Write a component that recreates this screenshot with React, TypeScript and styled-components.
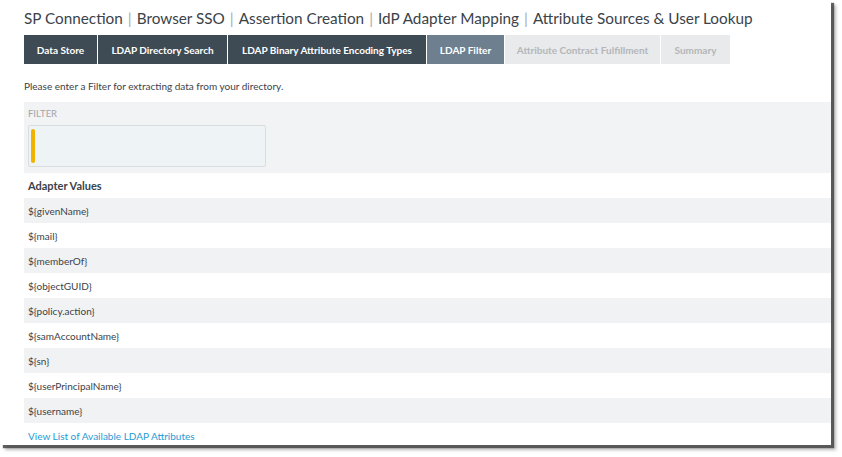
import React from "react";
import styled, { createGlobalStyle } from "styled-components";

const Global = createGlobalStyle`
  html, body { margin: 0; padding: 0; background: #ffffff; }
  body { font-family: Lato, "Open Sans", Arial, sans-serif; color: #333a40; }
`;

const Page = styled.div`
  width: 842px;
  height: 457px;
  overflow: hidden;
  background: #ffffff;
`;

const Panel = styled.div`
  width: 831px;
  height: 445px;
  background: #ffffff;
  box-shadow: 3px 3px 1px rgba(70, 70, 70, 0.85), 5px 5px 3px rgba(120, 120, 120, 0.5);
  padding: 8px 0 0 24px;
  box-sizing: border-box;
  display: flex;
  flex-direction: column;
`;

const Title = styled.h1`
  margin: 0;
  font-size: 15.3px;
  font-weight: 400;
  line-height: 20px;
  color: #3b4249;
  white-space: nowrap;
`;

const Sep = styled.span`
  color: #a5abb0;
  margin: 0 5px;
`;

const Tabs = styled.div`
  display: flex;
  gap: 1px;
  margin-top: 7px;
  height: 29px;
`;

type TabKind = "done" | "active" | "todo";

const Tab = styled.div<{ $kind: TabKind; $w: number }>`
  width: ${(p) => p.$w}px;
  display: flex;
  align-items: center;
  justify-content: center;
  font-size: 10px;
  font-weight: 700;
  white-space: nowrap;
  background: ${(p) =>
    p.$kind === "done" ? "#3e4b54" : p.$kind === "active" ? "#6e7f8f" : "#e9eaeb"};
  color: ${(p) => (p.$kind === "todo" ? "#b3b6ba" : "#ffffff")};
`;

const Intro = styled.p`
  margin: 15px 0 0;
  font-size: 10px;
  line-height: 14px;
  color: #3b4249;
`;

const FilterBox = styled.div`
  margin-top: 9px;
  background: #f2f3f4;
  height: 71px;
  padding: 6px 0 0 4px;
  box-sizing: border-box;
`;

const FieldLabel = styled.div`
  font-size: 9.5px;
  color: #a2a6aa;
  line-height: 12px;
  text-transform: uppercase;
`;

const Input = styled.div`
  margin-top: 5px;
  width: 238px;
  height: 42px;
  box-sizing: border-box;
  border: 1px solid #d9dde0;
  border-radius: 2px;
  background: #eef3f5;
  padding: 3px 2px;
  display: flex;
`;

const Required = styled.span`
  width: 3.5px;
  border-radius: 2px;
  background: #f0b400;
`;

const SectionHead = styled.div`
  margin-top: 2px;
  margin-bottom: 2px;
  padding-left: 4px;
  font-size: 11px;
  font-weight: 700;
  color: #3b4249;
  line-height: 21px;
`;

const Row = styled.div<{ $alt: boolean }>`
  height: 25px;
  display: flex;
  align-items: center;
  padding-left: 4px;
  font-size: 10px;
  color: #3b4249;
  background: ${(p) => (p.$alt ? "#f1f2f3" : "#ffffff")};
`;

const Link = styled.a`
  margin-top: 6px;
  padding-left: 4px;
  font-size: 10px;
  color: #1f9ad6;
  text-decoration: none;
  line-height: 14px;
`;

const crumbs = [
  "SP Connection",
  "Browser SSO",
  "Assertion Creation",
  "IdP Adapter Mapping",
  "Attribute Sources & User Lookup",
];

const tabs: { label: string; kind: TabKind; w: number }[] = [
  { label: "Data Store", kind: "done", w: 73 },
  { label: "LDAP Directory Search", kind: "done", w: 129 },
  { label: "LDAP Binary Attribute Encoding Types", kind: "done", w: 198 },
  { label: "LDAP Filter", kind: "active", w: 77 },
  { label: "Attribute Contract Fulfillment", kind: "todo", w: 155 },
  { label: "Summary", kind: "todo", w: 69 },
];

const values = [
  "givenName",
  "mail",
  "memberOf",
  "objectGUID",
  "policy.action",
  "samAccountName",
  "sn",
  "userPrincipalName",
  "username",
];

export default function App() {
  return (
    <Page>
      <Global />
      <Panel>
        <Title>
          {crumbs.map((c, i) => (
            <React.Fragment key={c}>
              {i > 0 && <Sep>|</Sep>}
              {c}
            </React.Fragment>
          ))}
        </Title>
        <Tabs>
          {tabs.map((t) => (
            <Tab key={t.label} $kind={t.kind} $w={t.w}>
              {t.label}
            </Tab>
          ))}
        </Tabs>
        <Intro>Please enter a Filter for extracting data from your directory.</Intro>
        <FilterBox>
          <FieldLabel>Filter</FieldLabel>
          <Input>
            <Required />
          </Input>
        </FilterBox>
        <SectionHead>Adapter Values</SectionHead>
        {values.map((v, i) => (
          <Row key={v} $alt={i % 2 === 0}>
            {"${" + v + "}"}
          </Row>
        ))}
        <Link href="#">View List of Available LDAP Attributes</Link>
      </Panel>
    </Page>
  );
}
